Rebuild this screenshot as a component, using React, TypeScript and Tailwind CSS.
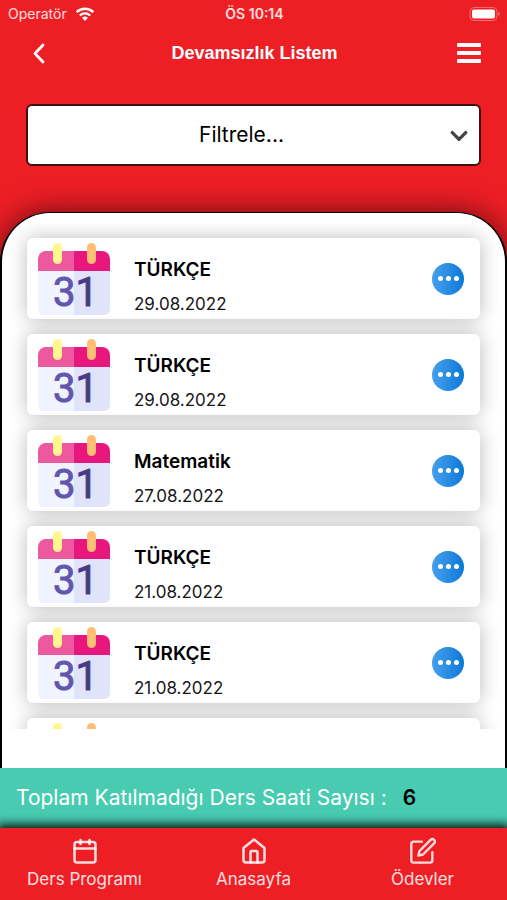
import React from "react";
import { FaChevronDown } from "react-icons/fa";
import { FiEdit } from "react-icons/fi";

type Absence = {
  id: number;
  lesson: string;
  date: string;
};

const absences: Absence[] = [
  { id: 1, lesson: "TÜRKÇE", date: "29.08.2022" },
  { id: 2, lesson: "TÜRKÇE", date: "29.08.2022" },
  { id: 3, lesson: "Matematik", date: "27.08.2022" },
  { id: 4, lesson: "TÜRKÇE", date: "21.08.2022" },
  { id: 5, lesson: "TÜRKÇE", date: "21.08.2022" },
  { id: 6, lesson: "TÜRKÇE", date: "21.08.2022" },
];

const StatusBar: React.FC = () => (
  <div className="grid h-7 shrink-0 grid-cols-3 items-center pr-1.5 pl-2 text-sm text-white/85">
    <div className="flex items-center gap-2">
      <span>Operatör</span>
      <svg width="20" height="14" viewBox="0 0 19 14" fill="none" aria-hidden="true">
        <path d="M1.2 5.1a12 12 0 0 1 16.6 0" stroke="white" strokeWidth="2.4" />
        <path d="M4.3 8.5a7.6 7.6 0 0 1 10.4 0" stroke="white" strokeWidth="2.3" />
        <path d="M6.5 10.8a4.4 4.4 0 0 1 6 0L9.5 13.9z" fill="white" />
      </svg>
    </div>
    <span className="text-center font-semibold">ÖS 10:14</span>
    <svg
      className="justify-self-end"
      width="32"
      height="14"
      viewBox="0 0 32 14"
      fill="none"
      aria-hidden="true"
    >
      <rect x="1" y="0.5" width="27" height="13" rx="4" stroke="white" strokeOpacity="0.35" />
      <rect x="3" y="2.5" width="23" height="9" rx="2" fill="white" />
      <path d="M29.5 5v4c1.6-.6 1.6-3.4 0-4z" fill="white" fillOpacity="0.5" />
    </svg>
  </div>
);

const Header: React.FC = () => (
  <header className="flex h-12 shrink-0 items-center justify-between pt-0.5 pr-5.5 pl-6 text-white">
    <button className="flex size-8 items-center justify-center" aria-label="Geri">
      <svg width="14" height="22" viewBox="0 0 14 22" fill="none">
        <path
          d="M10 3 2 11.5l8 8.5"
          stroke="white"
          strokeWidth="2.8"
          strokeLinecap="round"
          strokeLinejoin="round"
        />
      </svg>
    </button>
    <h1 className="font-['Liberation_Sans',sans-serif] text-lg font-bold">
      Devamsızlık Listem
    </h1>
    <button className="flex size-8 items-center justify-center" aria-label="Menü">
      <svg width="24" height="20" viewBox="0 0 24 20" fill="white">
        <rect x="0" y="0" width="24" height="4" rx="1" />
        <rect x="0" y="8" width="24" height="4" rx="1" />
        <rect x="0" y="16" width="24" height="4" rx="1" />
      </svg>
    </button>
  </header>
);

const CalendarIcon: React.FC = () => (
  <svg
    className="shrink-0"
    width="74"
    height="74"
    viewBox="0 0 74 74"
    aria-hidden="true"
  >
    <defs>
      <linearGradient id="digits" gradientUnits="userSpaceOnUse" x1="0" x2="74" y1="0" y2="0">
        <stop offset="0.52" stopColor="#6157ae" />
        <stop offset="0.52" stopColor="#453d83" />
      </linearGradient>
    </defs>
    <path d="M1 28h36v45H7a6 6 0 0 1-6-6z" fill="#f1f3ff" />
    <path d="M37 28h36v39a6 6 0 0 1-6 6H37z" fill="#e1e3fb" />
    <path d="M1 29V17a8 8 0 0 1 8-8h28v20z" fill="#ee589f" />
    <path d="M37 9h28a8 8 0 0 1 8 8v12H37z" fill="#e8177e" />
    <rect x="16" y="1" width="9" height="21" rx="4.5" fill="#fff68d" />
    <rect x="50" y="1" width="9" height="21" rx="4.5" fill="#ffbe74" />
    <text
      x="16"
      y="64"
      className="font-['Roboto',sans-serif] font-normal"
      fontSize="40"
      fill="url(#digits)"
      stroke="url(#digits)"
      strokeWidth="1"
      strokeLinejoin="round"
    >
      31
    </text>
  </svg>
);

const AbsenceCard: React.FC<{ absence: Absence }> = ({ absence }) => (
  <li className="flex h-[81px] shrink-0 items-center rounded-md bg-white pr-4 pl-2.5 shadow-[0_0_20px_rgba(0,0,0,0.27)]">
    <CalendarIcon />
    <div className="ml-[23px] flex-1 pt-3.5">
      <h2 className="text-[19px] leading-7 font-semibold text-black">{absence.lesson}</h2>
      <p className="mt-2 text-[17px] leading-6 text-neutral-900">{absence.date}</p>
    </div>
    <button
      className="flex size-8 items-center justify-center gap-[3px] rounded-full bg-linear-to-r from-[#42a0ec] to-[#0878d8]"
      aria-label="Detay"
    >
      <span className="size-[5px] rounded-full bg-white" />
      <span className="size-[5px] rounded-full bg-white" />
      <span className="size-[5px] rounded-full bg-white" />
    </button>
  </li>
);

const iconProps = {
  width: 28,
  height: 28,
  viewBox: "0 0 28 28",
  fill: "none",
  stroke: "currentColor",
  strokeWidth: 2.5,
  strokeLinecap: "round",
  strokeLinejoin: "round",
} as const;

const tabs = [
  {
    label: "Ders Programı",
    icon: (
      <svg {...iconProps}>
        <rect x="3.5" y="5" width="21" height="20.5" rx="2.5" />
        <path d="M3.5 11.5h21M9.5 3v4M18.5 3v4" />
      </svg>
    ),
  },
  {
    label: "Anasayfa",
    icon: (
      <svg {...iconProps}>
        <path d="M3.5 11 14 2.5 24.5 11v12a2.5 2.5 0 0 1-2.5 2.5H6A2.5 2.5 0 0 1 3.5 23z" />
        <path d="M10.5 25.5V15a1 1 0 0 1 1-1h5a1 1 0 0 1 1 1v10.5" />
      </svg>
    ),
  },
  { label: "Ödevler", icon: <FiEdit size={28} /> },
];

const TabBar: React.FC = () => (
  <nav className="grid shrink-0 grid-cols-3 bg-[#ee1e25] pt-[9px] pb-[7px] text-white/85 shadow-[0_0_10px_3px_black]">
    {tabs.map(({ label, icon }) => (
      <a key={label} href="#" className="flex flex-col items-center">
        {icon}
        <span className="text-[17px] leading-7">{label}</span>
      </a>
    ))}
  </nav>
);

const App: React.FC = () => {
  return (
    <div className="flex h-screen flex-col overflow-hidden bg-[#ee1e25] font-['Inter',sans-serif]">
      <StatusBar />
      <Header />

      {/* Filter */}
      <div className="relative mx-6.5 mt-7 shrink-0">
        <select
          aria-label="Filtrele"
          className="h-[62px] w-full appearance-none rounded-md border-2 border-[#3a1214] bg-white pr-6 text-center text-[21px] text-black"
        >
          <option>Filtrele...</option>
        </select>
        <FaChevronDown
          size={20}
          className="pointer-events-none absolute top-5.5 right-3 text-[#444]"
        />
      </div>

      {/* Absence list */}
      <main className="mt-11.5 flex min-h-0 flex-1 flex-col rounded-t-[50px] border-x-2 border-t border-black bg-white px-1.5 pt-[11px] pb-[39px] shadow-[0_0_30px_rgba(0,0,0,0.6)]">
        <ul className="flex min-h-0 flex-1 flex-col gap-[15px] overflow-hidden px-[19px] pt-3.5">
          {absences.map((absence) => (
            <AbsenceCard key={absence.id} absence={absence} />
          ))}
        </ul>
      </main>

      <div className="flex h-15 shrink-0 items-center gap-4 bg-[#48cbb1] px-4 text-[21px] text-white">
        <span>Toplam Katılmadığı Ders Saati Sayısı :</span>
        <strong className="font-semibold text-black">6</strong>
      </div>
      <TabBar />
    </div>
  );
};

export default App;
